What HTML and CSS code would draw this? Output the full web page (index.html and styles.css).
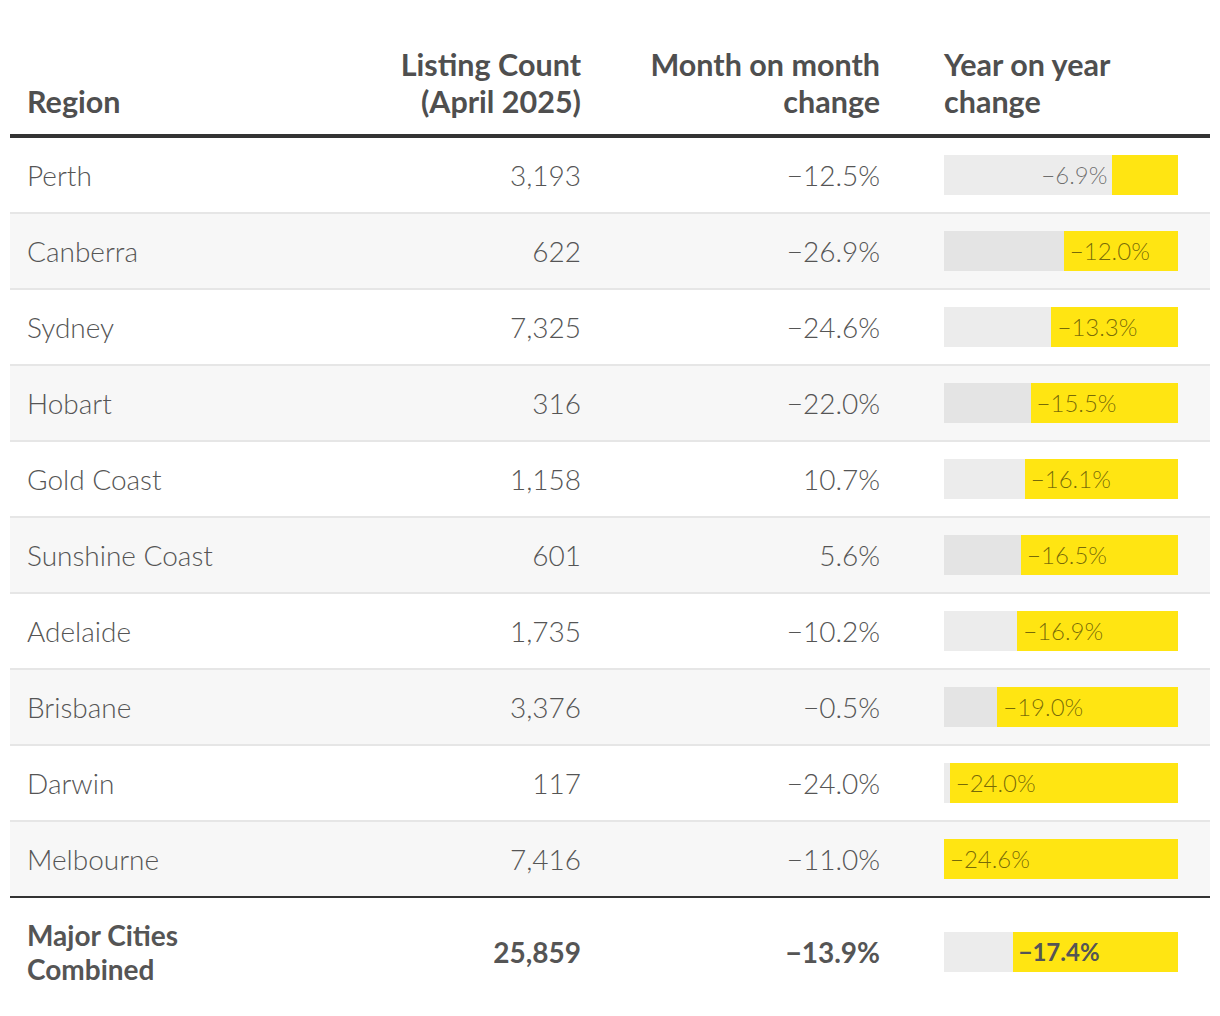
FILE: index.html
```html
<!DOCTYPE html>
<html lang="en">
<head>
<meta charset="utf-8">
<title>Listings by region</title>
<link rel="stylesheet" href="styles.css">
</head>
<body>
<div class="table">
  <div class="row head">
    <div class="c1">Region</div>
    <div class="c2">Listing Count<br>(April 2025)</div>
    <div class="c3">Month on month<br>change</div>
    <div class="c4">Year on year<br>change</div>
  </div>

  <div class="row">
    <div class="c1">Perth</div><div class="c2">3,193</div><div class="c3">−12.5%</div>
    <div class="c4"><div class="bar"><span class="lbl out">−6.9%</span><div class="fill" style="width:28.05%"></div></div></div>
  </div>
  <div class="row alt">
    <div class="c1">Canberra</div><div class="c2">622</div><div class="c3">−26.9%</div>
    <div class="c4"><div class="bar"><div class="fill" style="width:48.78%"><span class="lbl">−12.0%</span></div></div></div>
  </div>
  <div class="row">
    <div class="c1">Sydney</div><div class="c2">7,325</div><div class="c3">−24.6%</div>
    <div class="c4"><div class="bar"><div class="fill" style="width:54.07%"><span class="lbl">−13.3%</span></div></div></div>
  </div>
  <div class="row alt">
    <div class="c1">Hobart</div><div class="c2">316</div><div class="c3">−22.0%</div>
    <div class="c4"><div class="bar"><div class="fill" style="width:63.01%"><span class="lbl">−15.5%</span></div></div></div>
  </div>
  <div class="row">
    <div class="c1">Gold Coast</div><div class="c2">1,158</div><div class="c3">10.7%</div>
    <div class="c4"><div class="bar"><div class="fill" style="width:65.45%"><span class="lbl">−16.1%</span></div></div></div>
  </div>
  <div class="row alt">
    <div class="c1">Sunshine Coast</div><div class="c2">601</div><div class="c3">5.6%</div>
    <div class="c4"><div class="bar"><div class="fill" style="width:67.07%"><span class="lbl">−16.5%</span></div></div></div>
  </div>
  <div class="row">
    <div class="c1">Adelaide</div><div class="c2">1,735</div><div class="c3">−10.2%</div>
    <div class="c4"><div class="bar"><div class="fill" style="width:68.70%"><span class="lbl">−16.9%</span></div></div></div>
  </div>
  <div class="row alt">
    <div class="c1">Brisbane</div><div class="c2">3,376</div><div class="c3">−0.5%</div>
    <div class="c4"><div class="bar"><div class="fill" style="width:77.24%"><span class="lbl">−19.0%</span></div></div></div>
  </div>
  <div class="row">
    <div class="c1">Darwin</div><div class="c2">117</div><div class="c3">−24.0%</div>
    <div class="c4"><div class="bar"><div class="fill" style="width:97.56%"><span class="lbl">−24.0%</span></div></div></div>
  </div>
  <div class="row alt last">
    <div class="c1">Melbourne</div><div class="c2">7,416</div><div class="c3">−11.0%</div>
    <div class="c4"><div class="bar"><div class="fill" style="width:100%"><span class="lbl">−24.6%</span></div></div></div>
  </div>

  <div class="row total">
    <div class="c1">Major Cities<br>Combined</div><div class="c2">25,859</div><div class="c3">−13.9%</div>
    <div class="c4"><div class="bar"><div class="fill" style="width:70.73%"><span class="lbl">−17.4%</span></div></div></div>
  </div>
</div>
</body>
</html>
```

FILE: styles.css
```css
html, body {
  margin: 0;
  padding: 0;
  background: #fff;
}

body {
  font-family: Lato, "Open Sans", sans-serif;
  color: #555;
}

.table {
  margin: 0 10px;
  padding-top: 46px;
}

.row {
  display: grid;
  grid-template-columns: 290px 297px 331px 1fr;
  align-items: center;
  height: 74px;
  border-bottom: 2px solid #e6e6e6;
  font-size: 28px;
  font-weight: 300;
}

.row.alt {
  background: #f7f7f7;
}

.row.last {
  border-bottom: 2px solid #333;
}

.c1 { padding-left: 17px; }
.c2 { text-align: right; padding-right: 16px; }
.c3 { text-align: right; padding-right: 48px; }
.c4 { padding-left: 16px; }

.row.head {
  height: auto;
  align-items: end;
  font-size: 30.5px;
  font-weight: 700;
  line-height: 37px;
  padding-bottom: 14px;
  border-bottom: 4px solid #333;
  color: #4f4f4f;
}

.row.total {
  height: 108px;
  border-bottom: none;
  font-weight: 700;
  line-height: 34px;
}

.bar {
  width: 234px;
  height: 40px;
  background: rgba(0, 0, 0, 0.075);
  display: flex;
  justify-content: flex-end;
  align-items: stretch;
}

.fill {
  background: #ffe512;
  display: flex;
  align-items: center;
}

.lbl {
  font-size: 24px;
  font-weight: 300;
  color: rgba(0, 0, 0, 0.55);
  padding-left: 6px;
  white-space: nowrap;
  line-height: 40px;
}

.lbl.out {
  padding-left: 0;
  padding-right: 5px;
}

.total .lbl {
  font-weight: 700;
  color: #555;
}
```
